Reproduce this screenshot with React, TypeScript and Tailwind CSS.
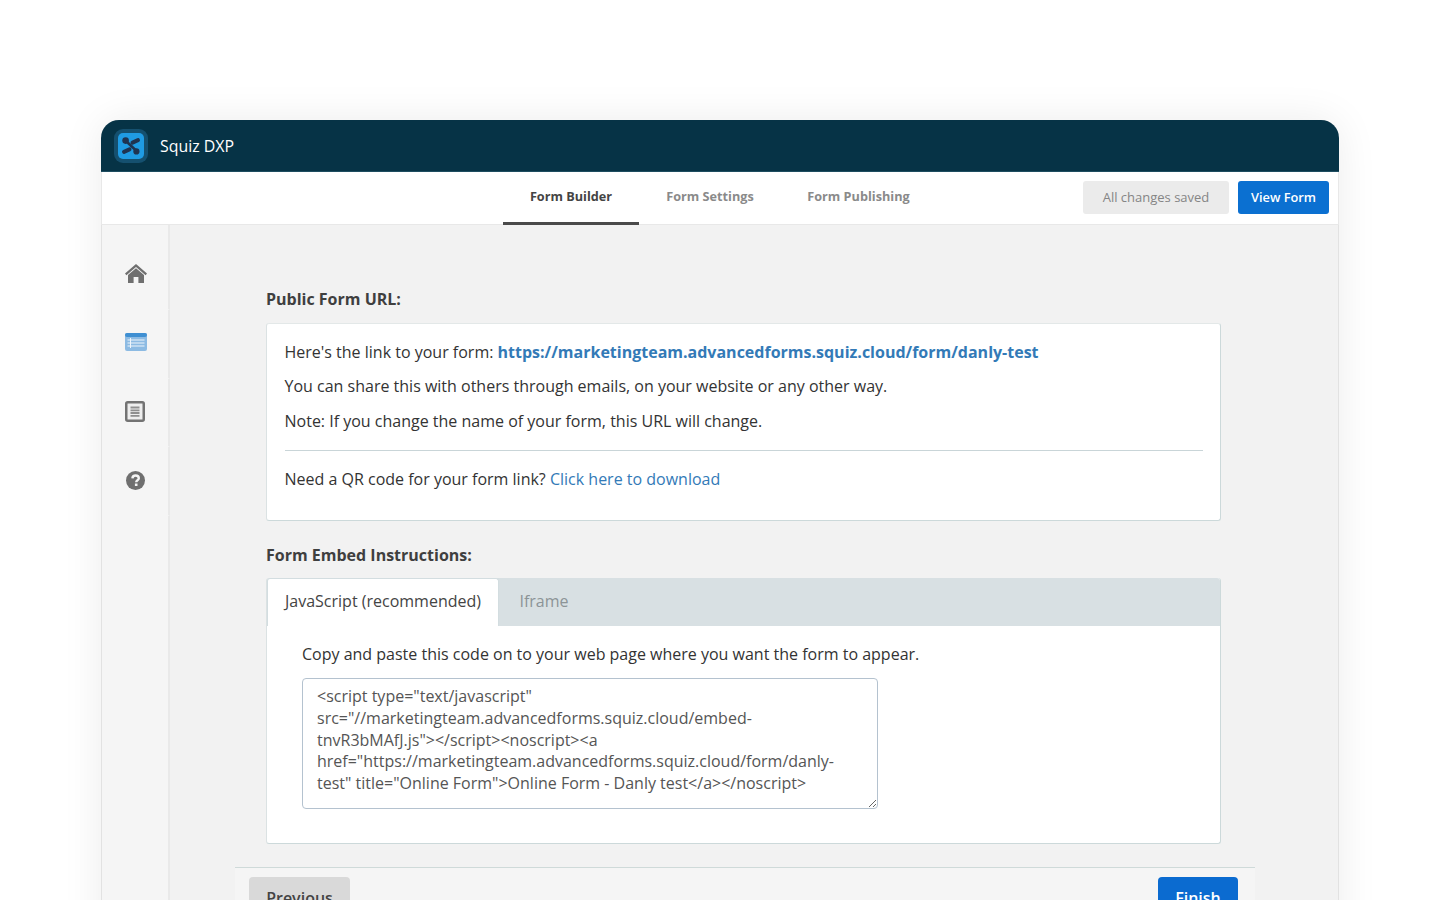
import React from "react";

function Logo() {
  return (
    <div className="flex h-[34px] w-[34px] items-center justify-center rounded-[9px] bg-[#15506f]">
      <svg width="26" height="26" viewBox="0 0 26 26">
        <rect x="0" y="0" width="26" height="26" rx="5" fill="#1f9be3" />
        <circle cx="7.6" cy="7.6" r="3.3" fill="#1f3350" />
        <circle cx="18.4" cy="18.4" r="3.1" fill="#1f3350" />
        <path d="M8 8 L19 18.5" stroke="#1f3350" strokeWidth="2.6" />
        <path d="M20 7.2 L14.5 9.6" stroke="#1f3350" strokeWidth="4" strokeLinecap="round" />
        <path d="M6 18.8 L11.5 16.4" stroke="#1f3350" strokeWidth="4" strokeLinecap="round" />
      </svg>
    </div>
  );
}

function HomeIcon() {
  return (
    <svg width="22" height="19" viewBox="0 0 22 19" fill="#6f6f6f">
      <path d="M11 0 L22 9.6 L20.6 11.2 L11 2.9 L1.4 11.2 L0 9.6 Z" />
      <path d="M11 4.2 L19 11 V19 H13.4 V13 H8.6 V19 H3 V11 Z" />
    </svg>
  );
}

function FormIcon() {
  return (
    <svg width="22" height="18" viewBox="0 0 22 18">
      <rect x="0" y="0" width="22" height="18" rx="2" fill="#8dbbe3" />
      <rect x="0" y="0" width="22" height="4" rx="2" fill="#3f8fd2" />
      <path d="M2.5 7 H19.5 M2.5 10 H19.5 M2.5 13 H19.5" stroke="#eef5fb" strokeWidth="1" />
      <path d="M5.5 5 V15" stroke="#eef5fb" strokeWidth="1" />
    </svg>
  );
}

function DocIcon() {
  return (
    <svg width="20" height="21" viewBox="0 0 20 21">
      <rect x="1.25" y="1.25" width="17.5" height="18.5" rx="1.5" fill="#eeeeee" stroke="#737373" strokeWidth="2.5" />
      <path d="M5.5 6.5 H14.5 M5.5 9.3 H14.5 M5.5 12 H14.5 M5.5 14.8 H14.5" stroke="#8f8f8f" strokeWidth="1.8" />
    </svg>
  );
}

function HelpIcon() {
  return (
    <svg width="19" height="19" viewBox="0 0 19 19">
      <circle cx="9.5" cy="9.5" r="9.5" fill="#6f6f6f" />
      <path d="M6.4 7.4 C6.5 5.5 8 4.5 9.6 4.5 C11.4 4.5 12.8 5.6 12.8 7.2 C12.8 9.3 10.2 9.2 10.2 11.2" stroke="#f4f4f4" strokeWidth="2.4" fill="none" />
      <rect x="8.9" y="12.5" width="2.6" height="2.5" fill="#f4f4f4" />
    </svg>
  );
}

const railRows = [
  { icon: <HomeIcon />, h: "h-[85px] pt-[39px] pl-[1px]" },
  { icon: <FormIcon />, h: "h-[69px] pt-[23px] pl-[1px]" },
  { icon: <DocIcon />, h: "h-[68px] pt-[22px]" },
  { icon: <HelpIcon />, h: "h-[69px] pt-[24px]" },
];

export default function App() {
  return (
    <div className="h-[900px] overflow-hidden bg-white pt-[120px] font-['Open_Sans',sans-serif]">
      <div className="mx-[101px] h-[900px] rounded-t-[18px] bg-[#f2f2f2] shadow-[0_0_40px_rgba(0,0,0,0.08)]">
        <header className="flex h-[52px] items-center gap-[12px] rounded-t-[18px] border-b border-[#1e4d60] bg-[#063346] pl-[13px]">
          <Logo />
          <span className="pt-[3px] text-[15.9px] text-white">Squiz DXP</span>
        </header>

        <div className="relative flex h-[53px] items-center justify-end border-b border-x border-[#e8e8e8] bg-white pb-[1px] pr-[9px]">
          <nav className="absolute left-[401px] top-0 flex h-[53px] text-[12.7px] font-bold text-[#8a8a8a]">
            <a className="flex w-[136px] items-center justify-center border-b-[3px] border-[#4a4a4a] text-[#444444]">Form Builder</a>
            <a className="flex w-[141px] items-center justify-center pb-[3px] pl-[1px]">Form Settings</a>
            <a className="flex w-[157px] items-center justify-center pb-[3px]">Form Publishing</a>
          </nav>
          <div className="mr-[9px] flex h-[33px] w-[146px] items-center justify-center rounded-[3px] bg-[#ebebeb] text-[13px] text-[#858585]">All changes saved</div>
          <button className="flex h-[33px] w-[91px] items-center justify-center rounded-[3px] bg-[#0b70d1] text-[12.8px] font-semibold text-white">View Form</button>
        </div>

        <div className="flex border-x border-[#e2e2e2]">
          <aside className="flex w-[68px] shrink-0 flex-col bg-[#f5f5f5]">
            {railRows.map((r, i) => (
              <div key={i} className={`flex justify-center border-r-2 border-b border-r-[#e9e9e9] border-b-[#f5f5f5] ${r.h}`}>
                <div>{r.icon}</div>
              </div>
            ))}
            <div className="flex-1 border-r-2 border-[#e9e9e9]" />
          </aside>

          <main className="flex-1 pl-[96px] pt-[64px]">
            <div className="w-[955px]">
              <h2 className="text-[16px] font-bold leading-[21px] text-[#3f3f3f]">Public Form URL:</h2>
              <section className="mt-[13px] h-[198px] rounded-[3px] border border-t-[#e3e8e8] border-l-[#dbe2e3] border-r-[#ccd9da] border-b-[#ccd9da] bg-white px-[17.5px] pt-[16px] text-[16px] leading-[24px] text-[#333333]">
                <p>
                  Here's the link to your form: <a className="font-bold text-[#337ab7]">https://marketingteam.advancedforms.squiz.cloud/form/danly-test</a>
                </p>
                <p className="mt-[10px]">You can share this with others through emails, on your website or any other way.</p>
                <p className="mt-[11px]">Note: If you change the name of your form, this URL will change.</p>
                <div className="mt-[17px] border-t border-[#c9d5d8] pt-[16px]">
                  Need a QR code for your form link? <a className="text-[#337ab7]">Click here to download</a>
                </div>
              </section>

              <h2 className="mt-[23px] text-[16px] font-bold leading-[22px] text-[#3f3f3f]">Form Embed Instructions:</h2>
              <section className="mt-[12px] h-[266px] rounded-[3px] border border-t-0 border-l-[#dbe2e3] border-r-[#ccd9da] border-b-[#ccd9da] bg-white">
                <div className="flex h-[48px] rounded-t-[3px] bg-[#d8e0e3] text-[16px]">
                  <div className="flex h-[48px] w-[232px] items-center justify-center rounded-t-[3px] border border-b-0 border-[#d3dde0] bg-white pb-[3px] text-[#444444]">JavaScript (recommended)</div>
                  <div className="flex w-[90px] items-center justify-center pb-[2px] text-[#8c9497]">Iframe</div>
                </div>
                <div className="pl-[35px] pt-[16px]">
                  <p className="text-[16px] leading-[24px] text-[#333333]">Copy and paste this code on to your web page where you want the form to appear.</p>
                  <textarea
                    readOnly
                    className="mt-[12px] block h-[131px] w-[576px] rounded-[4px] border border-[#b4c2cf] bg-white px-[14px] pb-[8px] pt-[7px] text-[16px] leading-[21.8px] text-[#555555] outline-none"
                    value={`<script type="text/javascript" src="//marketingteam.advancedforms.squiz.cloud/embed-tnvR3bMAfJ.js"></script><noscript><a href="https://marketingteam.advancedforms.squiz.cloud/form/danly-test" title="Online Form">Online Form - Danly test</a></noscript>`}
                  />
                </div>
              </section>
            </div>

            <div className="-ml-[31px] mt-[23px] flex h-[60px] w-[1020px] items-start justify-between border-t border-[#cfdad9] bg-[#f5f5f5] pl-[14px] pr-[17px] pt-[9px]">
              <button className="h-[42px] w-[101px] rounded-[4px] bg-[#d9d9d9] text-[16px] font-semibold text-[#444444]">Previous</button>
              <button className="h-[42px] w-[80px] rounded-[4px] bg-[#0b6bd0] text-[16px] font-semibold text-white">Finish</button>
            </div>
          </main>
        </div>
      </div>
    </div>
  );
}
